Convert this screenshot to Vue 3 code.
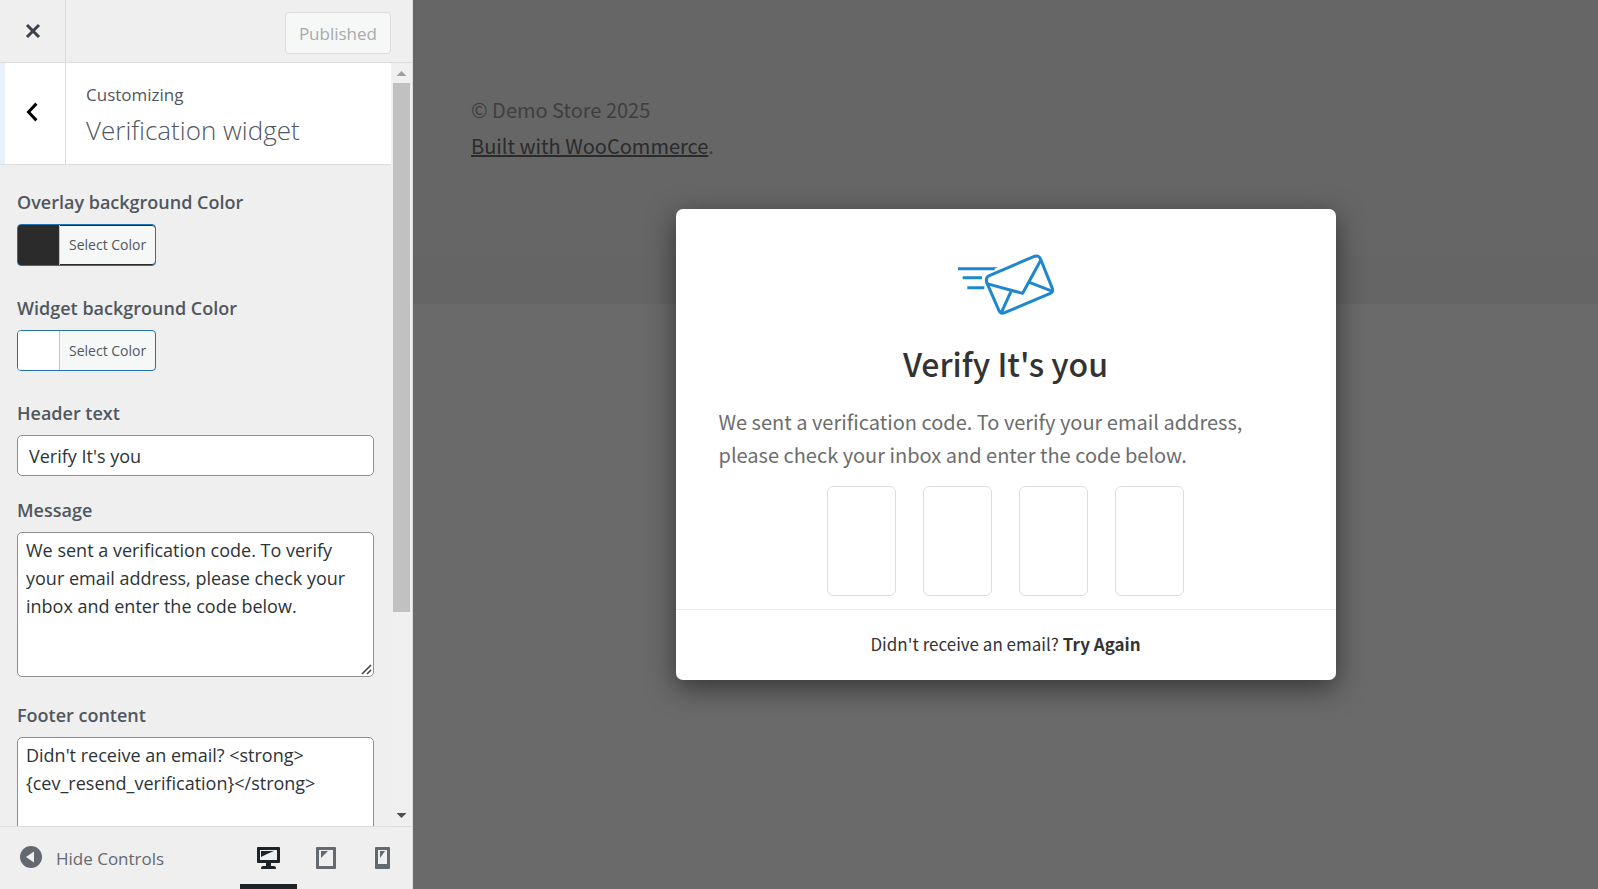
<script setup>
import { ref } from 'vue'

const headerText = ref("Verify It's you")
const message = ref(
  'We sent a verification code. To verify your email address, please check your inbox and enter the code below.'
)
const footerContent = ref("Didn't receive an email? <strong>{cev_resend_verification}</strong>")
const digits = ref(['', '', '', ''])
const device = ref('desktop')
</script>

<template>
  <div class="customizer">
    <aside class="sidebar">
      <header class="topbar">
        <button class="close" type="button" aria-label="Close">
          <svg width="16" height="16" viewBox="0 0 16 16">
            <path d="M2 2L14 14M14 2L2 14" stroke="#3c434a" stroke-width="3" fill="none" />
          </svg>
        </button>
        <button class="published" type="button" disabled>Published</button>
      </header>

      <div class="panel">
        <div class="scroll">
          <div class="section-title">
            <button class="back" type="button" aria-label="Back">
              <svg width="12" height="20" viewBox="0 0 12 20">
                <path d="M10.400 1.600L2.500 10L10.400 18.400" stroke="#000" stroke-width="3" fill="none" />
              </svg>
            </button>
            <div class="titles">
              <span class="crumb">Customizing</span>
              <h1>Verification widget</h1>
            </div>
          </div>

          <div class="controls">
            <div class="control color">
              <span id="overlay-label" class="label">Overlay background Color</span>
              <button class="picker dark" type="button" aria-describedby="overlay-label">
                <span class="swatch"></span><span class="picker-text">Select Color</span>
              </button>
            </div>
            <div class="control color">
              <span id="widget-label" class="label">Widget background Color</span>
              <button class="picker" type="button" aria-describedby="widget-label">
                <span class="swatch"></span><span class="picker-text">Select Color</span>
              </button>
            </div>
            <div class="control">
              <label class="label" for="header-text">Header text</label>
              <input id="header-text" v-model="headerText" class="field" type="text" />
            </div>
            <div class="control message">
              <label class="label" for="message">Message</label>
              <div class="area-wrap">
                <textarea id="message" v-model="message" class="field area"></textarea>
                <svg class="grip" width="11" height="11" viewBox="0 0 11 11">
                  <path d="M1 10L10 1M6 10L10 6" stroke="#444" stroke-width="1.600" fill="none" />
                </svg>
              </div>
            </div>
            <div class="control">
              <label class="label" for="footer-content">Footer content</label>
              <textarea id="footer-content" v-model="footerContent" class="field area"></textarea>
            </div>
          </div>
        </div>
        <div class="scrollbar" aria-hidden="true">
          <span class="arrow up"></span>
          <span class="track"><span class="thumb"></span></span>
          <span class="arrow down"></span>
        </div>
      </div>

      <footer class="bottombar">
        <button class="hide" type="button">
          <svg width="22" height="22" viewBox="0 0 22 22">
            <circle cx="11" cy="11" r="11" fill="#646970" />
            <path d="M14 5.500V16.500L6 11Z" fill="#f0f0f1" />
          </svg>
          <span>Hide Controls</span>
        </button>
        <div class="devices">
          <button
            type="button"
            aria-label="Desktop preview"
            :class="{ active: device === 'desktop' }"
            @click="device = 'desktop'"
          >
            <svg width="23" height="23" viewBox="0 0 23 23">
              <path
                fill-rule="evenodd"
                fill="currentColor"
                d="M1 0H22Q23 0 23 1V15Q23 16 22 16H14V19H17Q19 19 19 22H4Q4 19 6 19H9V16H1Q0 16 0 15V1Q0 0 1 0ZM3 3V13H20V3Z"
              />
              <path fill="currentColor" d="M4 4H17L10 7L4 10Z" />
            </svg>
          </button>
          <button
            type="button"
            aria-label="Tablet preview"
            :class="{ active: device === 'tablet' }"
            @click="device = 'tablet'"
          >
            <svg width="20" height="23" viewBox="0 0 20 23">
              <path
                fill-rule="evenodd"
                fill="currentColor"
                d="M1 0H19Q20 0 20 1V21Q20 22 19 22H1Q0 22 0 21V1Q0 0 1 0ZM3 3V19H17V3Z"
              />
              <path fill="currentColor" d="M5 4H12L5 11Z" />
            </svg>
          </button>
          <button
            type="button"
            aria-label="Mobile preview"
            :class="{ active: device === 'mobile' }"
            @click="device = 'mobile'"
          >
            <svg width="15" height="23" viewBox="0 0 15 23">
              <path
                fill-rule="evenodd"
                fill="currentColor"
                d="M1 0H14Q15 0 15 1V21Q15 22 14 22H1Q0 22 0 21V1Q0 0 1 0ZM3 3V17H12V3Z"
              />
              <path fill="currentColor" d="M5 4H10L5 11Z" />
            </svg>
          </button>
        </div>
      </footer>
    </aside>

    <main class="preview">
      <div class="store">
        <p>© Demo Store 2025<br /><a href="#">Built with WooCommerce</a>.</p>
      </div>
      <div class="overlay">
        <section class="modal" aria-labelledby="modal-title">
          <div class="modal-body">
            <svg class="mail" width="96" height="63" viewBox="84 68 288 189">
              <g fill="none" stroke="#1e87cd" stroke-width="9" stroke-linejoin="round">
                <path d="M84 115.500H194M98 142.500H156M112 172.500H163" />
                <path
                  d="M178 136L311 79Q326 72 332 87L367 174Q371 184 361 189L224 247Q212 252 207 241L170 156Q166 142 178 136Z"
                />
                <path d="M170 160L278 189L333 88M243 183L214 247M300 157L368 183" />
              </g>
              <path d="M190 111H204L182 120Z" fill="#1e87cd" />
            </svg>
            <h2 id="modal-title">{{ headerText }}</h2>
            <p class="text">{{ message }}</p>
            <div class="digits">
              <input
                v-for="(d, i) in digits"
                :key="i"
                v-model="digits[i]"
                type="text"
                maxlength="1"
                :aria-label="`Digit ${i + 1}`"
              />
            </div>
          </div>
          <div class="modal-footer">Didn't receive an email? <a href="#">Try Again</a></div>
        </section>
      </div>
    </main>
  </div>
</template>

<style>
body {
  margin: 0;
}
</style>

<style scoped>
* {
  box-sizing: border-box;
}
button {
  font: inherit;
  color: inherit;
  background: none;
  border: 0;
  padding: 0;
  cursor: pointer;
}
svg {
  display: block;
}
.customizer {
  display: flex;
  height: 100vh;
  overflow: hidden;
}
.sidebar {
  flex: none;
  width: 413px;
  display: flex;
  flex-direction: column;
  background: #efefef;
  border-right: 1px solid #dcdcde;
  color: #50575e;
  font-family: "Open Sans", "Noto Sans", sans-serif;
  font-size: 18px;
}
.topbar {
  flex: none;
  height: 63px;
  display: flex;
  align-items: center;
  justify-content: space-between;
  padding-right: 21px;
  border-bottom: 1px solid #dcdcde;
}
.close {
  width: 66px;
  height: 62px;
  display: grid;
  place-items: center;
  border-right: 1px solid #dcdcde;
}
.published {
  height: 42px;
  padding: 0 13px;
  margin-top: 4px;
  border: 1px solid #dcdcde;
  border-radius: 4px;
  background: #f6f7f7;
  color: #a7aaad;
  font-size: 17px;
}
.panel {
  flex: 1;
  min-height: 0;
  display: flex;
}
.scroll {
  flex: 1;
  min-width: 0;
  overflow-y: auto;
  scrollbar-width: none;
}
.section-title {
  display: flex;
  height: 102px;
  background: #fff;
  border-bottom: 1px solid #dcdcde;
}
.back {
  width: 66px;
  border-left: 5px solid #e8f0f9;
  border-right: 1px solid #dcdcde;
  display: grid;
  place-items: center;
  padding: 0 6px 4px 0;
}
.titles {
  padding: 19px 20px 0;
}
.crumb {
  display: block;
  font-size: 17px;
  line-height: 26px;
}
h1 {
  margin: 4px 0 0;
  font-size: 26px;
  line-height: 36px;
  font-weight: 300;
}
.controls {
  padding: 23px 17px 0;
}
.control {
  margin-bottom: 20px;
}
.control.color {
  margin-bottom: 28px;
}
.control.message {
  margin-bottom: 24px;
}
.label {
  display: block;
  margin-bottom: 8px;
  font-weight: 600;
  font-size: 18px;
  line-height: 28px;
}
.picker {
  display: flex;
  height: 41px;
  overflow: hidden;
  border: 1px solid #2271b1;
  border-radius: 4px;
  background: #f6f7f7;
}
.swatch {
  width: 42px;
  background: #fff;
  border-right: 1px solid #c3c4c7;
}
.picker.dark {
  height: 42px;
  box-shadow: inset 0 1px #2b2b2b, inset 0 -1px #2b2b2b;
}
.dark .swatch {
  background: #2b2b2b;
}
.picker-text {
  padding: 0 9px;
  font-size: 14px;
  line-height: 40px;
}
.field {
  display: block;
  width: 100%;
  height: 41px;
  padding: 0 11px;
  border: 1px solid #8c8f94;
  border-radius: 5px;
  background: #fff;
  color: #2c3338;
  font: 18px/28px "Open Sans", "Noto Sans", sans-serif;
  outline: 0;
}
.area {
  height: 145px;
  padding: 3px 8px;
  resize: none;
}
.area-wrap {
  position: relative;
}
.grip {
  position: absolute;
  right: 2px;
  bottom: 2px;
}
.scrollbar {
  flex: none;
  width: 21px;
  padding: 0 2px;
  display: flex;
  flex-direction: column;
  align-items: center;
  background: #f0f0f0;
}
.arrow {
  width: 10px;
  height: 5px;
  background: #a0a0a0;
}
.up {
  margin: 8px 0 7px;
  clip-path: polygon(50% 0, 100% 100%, 0 100%);
}
.down {
  margin: 6px 0 8px;
  background: #505050;
  clip-path: polygon(0 0, 100% 0, 50% 100%);
}
.track {
  flex: 1;
  width: 100%;
}
.thumb {
  display: block;
  height: 73%;
  background: #c1c1c1;
}
.bottombar {
  flex: none;
  height: 63px;
  display: flex;
  justify-content: space-between;
  border-top: 1px solid #dcdcde;
}
.hide {
  display: flex;
  align-items: center;
  gap: 14px;
  padding-left: 20px;
  font-size: 17px;
  color: #646970;
}
.hide svg {
  margin-bottom: 3px;
}
.devices {
  display: flex;
  margin-right: 1px;
  color: #646970;
}
.devices button {
  width: 57px;
  padding-top: 6px;
  border-bottom: 5px solid transparent;
  display: grid;
  place-items: center;
}
.devices .active {
  color: #1d2327;
  border-bottom-color: #1d2327;
}

.preview {
  flex: 1;
  position: relative;
  background: #6a6a6a;
  font-family: "Noto Sans CJK SC", "Noto Sans", sans-serif;
}
.store {
  height: 304px;
  padding: 92px 58px 0;
  background: #666;
  border-bottom: 49px solid #656565;
  color: #3f3f3f;
  font-size: 20px;
  line-height: 36px;
}
.store p {
  margin: 0;
}
.store a {
  color: #2b2b2b;
  text-decoration-thickness: 2px;
}
.overlay {
  position: absolute;
  inset: 0;
  display: flex;
  align-items: center;
  justify-content: center;
}
.modal {
  width: 660px;
  border-radius: 7px;
  background: #fff;
  box-shadow: 0 8px 28px rgba(0, 0, 0, 0.5);
}
.modal-body {
  padding: 44px 43px 13px;
}
.mail {
  margin: 0 auto;
}
h2 {
  margin: 25px 0 20px;
  font-size: 32px;
  line-height: 44px;
  font-weight: 500;
  color: #333;
  text-align: center;
}
.text {
  margin: 0 0 15px;
  font-size: 20px;
  line-height: 33px;
  color: #6d6d6d;
}
.digits {
  display: flex;
  justify-content: center;
  gap: 27px;
}
.digits input {
  width: 69px;
  height: 110px;
  border: 1px solid #ddd;
  border-radius: 6px;
  background: #fff;
  font-size: 36px;
  text-align: center;
  outline: 0;
}
.modal-footer {
  padding: 20px 0 22px;
  border-top: 1px solid #ececec;
  font-size: 17px;
  line-height: 28px;
  color: #333;
  text-align: center;
}
.modal-footer a {
  color: inherit;
  font-weight: 700;
  text-decoration: none;
}
</style>
